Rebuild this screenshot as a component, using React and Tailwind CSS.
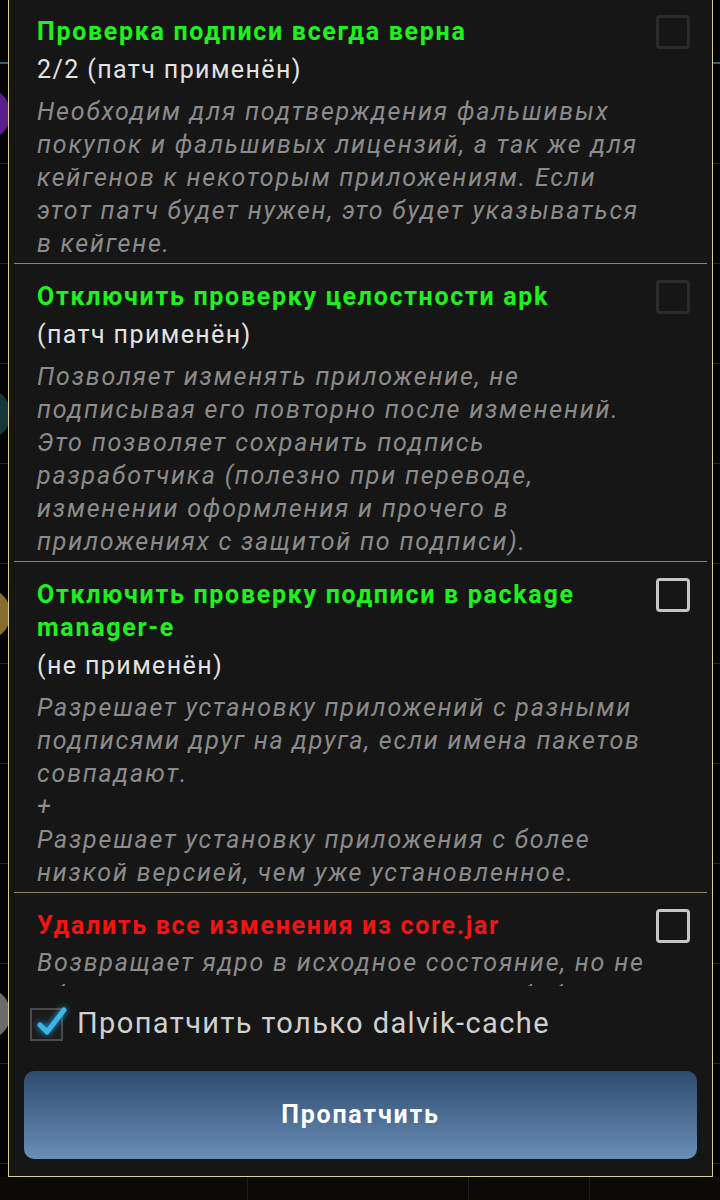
import React from 'react';

const patches = [
  {
    title: 'Проверка подписи всегда верна',
    color: 'text-[#1ef21e]',
    status: '2/2 (патч применён)',
    enabled: false,
    lines: [
      'Необходим для подтверждения фальшивых',
      'покупок и фальшивых лицензий, а так же для',
      'кейгенов к некоторым приложениям. Если',
      'этот патч будет нужен, это будет указываться',
      'в кейгене.',
    ],
  },
  {
    title: 'Отключить проверку целостности apk',
    color: 'text-[#1ef21e]',
    status: '(патч применён)',
    enabled: false,
    lines: [
      'Позволяет изменять приложение, не',
      'подписывая его повторно после изменений.',
      'Это позволяет сохранить подпись',
      'разработчика (полезно при переводе,',
      'изменении оформления и прочего в',
      'приложениях с защитой по подписи).',
    ],
  },
  {
    title: ['Отключить проверку подписи в package', 'manager-e'],
    color: 'text-[#1ef21e]',
    status: '(не применён)',
    enabled: true,
    lines: [
      'Разрешает установку приложений с разными',
      'подписями друг на друга, если имена пакетов',
      'совпадают.',
      '+',
      'Разрешает установку приложения с более',
      'низкой версией, чем уже установленное.',
    ],
  },
  {
    title: 'Удалить все изменения из core.jar',
    color: 'text-[#f21414]',
    status: null,
    enabled: true,
    lines: [
      'Возвращает ядро в исходное состояние, но не',
      'сбрасывает изменения в системной библиотеке.',
    ],
  },
];

// rows of the app list that peeks out from behind the dialog
const bgRows = ['#5a1f8c', null, null, '#17363a', null, '#8a6d2c', null, null, null, '#6b6b6b', null, null];

const Box = ({ enabled }) => (
  <div
    className={
      enabled
        ? 'w-[34px] h-[34px] shrink-0 rounded-[4px] border-[3px] border-[#c6c6c6]'
        : 'w-[34px] h-[34px] shrink-0 rounded-[4px] border-[3px] border-[#2b2b2b]'
    }
  />
);

const PatchItem = ({ patch, last }) => {
  const title = Array.isArray(patch.title) ? patch.title : [patch.title];
  return (
    <div>
      <div className="flex items-start pl-[28px] pr-[22px] pt-[16px] pb-[3px]">
        <div className="flex-1 min-w-0">
          {title.map((t, i) => (
            <div
              key={i}
              className={`font-bold text-[25px] leading-[33px] tracking-[1.7px] whitespace-nowrap ${patch.color}`}
            >
              {t}
            </div>
          ))}
          {patch.status && (
            <div className="mt-[5px] text-[25px] leading-[33px] tracking-[1.4px] text-[#e2e2e2]">
              {patch.status}
            </div>
          )}
          <div className={patch.status ? 'mt-[9px]' : 'mt-[4px]'}>
            {patch.lines.map((l, i) => (
              <div
                key={i}
                className="italic text-[25px] leading-[33px] tracking-[1.8px] text-[#8b8b8b] whitespace-nowrap"
              >
                {l}
              </div>
            ))}
          </div>
        </div>
        <Box enabled={patch.enabled} />
      </div>
      {!last && <div className="mx-[5px] h-px bg-[#8a8362]" />}
    </div>
  );
};

export default function App() {
  return (
    <div
      className="relative w-[720px] h-[1200px] overflow-hidden bg-[#030303]"
      style={{ fontFamily: 'Roboto, "Noto Sans", sans-serif' }}
    >
      {/* app list behind the dialog */}
      <div className="flex flex-col h-full">
        <div className="h-[64px] shrink-0 border-b-2 border-[#3d5b6b]" />
        {bgRows.map((c, i) => (
          <div key={i} className="h-[100px] shrink-0 flex items-center border-b border-[#262626]">
            {c && <div className="ml-[-36px] w-[46px] h-[50px] rounded-full" style={{ background: c }} />}
          </div>
        ))}
      </div>
      <div className="absolute left-0 bottom-0 w-full h-[23px] bg-[#0b0a06] flex">
        <div className="w-[248px] border-r border-[#1c1c1c]" />
        <div className="w-[221px] border-r border-[#1c1c1c]" />
        <div className="w-[121px] border-r border-[#1c1c1c]" />
      </div>

      {/* dialog */}
      <div className="absolute left-[8px] top-[-2px] w-[705px] h-[1179px] border border-[#d8cf9e] bg-[#161616] flex flex-col">
        <div className="h-[987px] shrink-0 overflow-hidden">
          {patches.map((p, i) => (
            <PatchItem key={i} patch={p} last={i === patches.length - 1} />
          ))}
        </div>
        <div className="flex items-center h-[69px] pt-[7px] pl-[21px]">
          <div className="relative w-[33px] h-[33px] border-2 border-[#4a4a4a] bg-[#1b1b1b]">
            <svg
              className="absolute left-[2px] top-[-6px]"
              width="36"
              height="36"
              viewBox="0 0 36 36"
              style={{ filter: 'drop-shadow(0 0 3px #2fa8e0)' }}
            >
              <path
                d="M6 21 L13 28 L30 6"
                fill="none"
                stroke="#3ab6ea"
                strokeWidth="5"
                strokeLinecap="round"
                strokeLinejoin="round"
              />
            </svg>
          </div>
          <span className="ml-[14px] text-[29px] tracking-[1.4px] text-[#d0d0d0]">
            Пропатчить только dalvik-cache
          </span>
        </div>
        <div className="px-[15px] pt-[16px]">
          <button className="w-full h-[88px] rounded-[10px] bg-gradient-to-b from-[#2d4b6e] to-[#6b8fb8] text-white font-bold text-[25px] tracking-[1.8px]">
            Пропатчить
          </button>
        </div>
      </div>
    </div>
  );
}
